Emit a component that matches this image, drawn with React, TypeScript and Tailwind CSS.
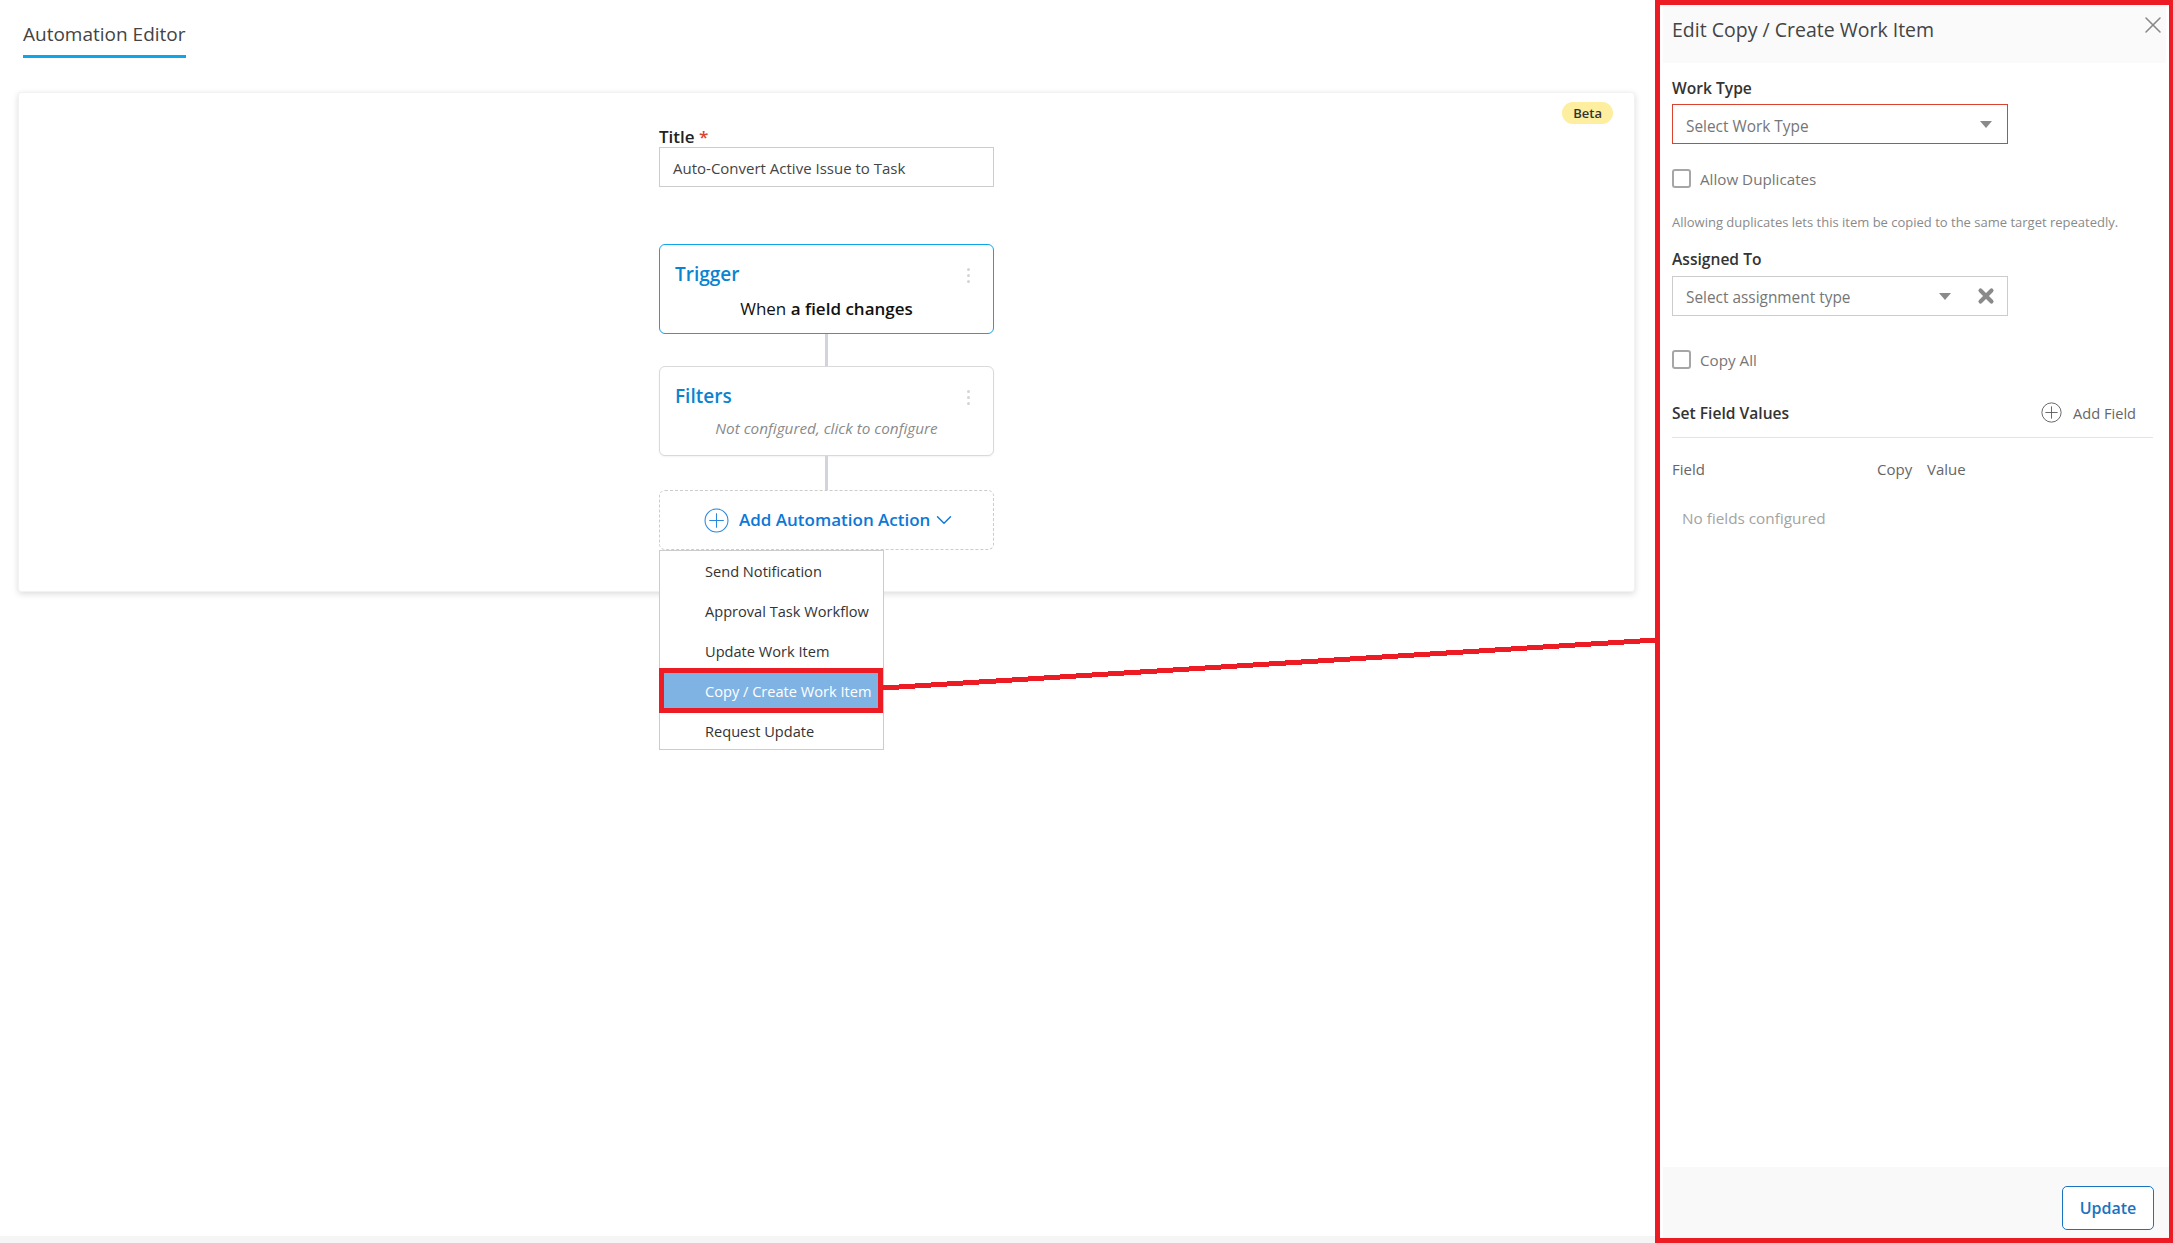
import { ChevronDown, X } from 'lucide-react';

const FONT = "font-['Open_Sans','Noto_Sans',sans-serif]";

const MENU_ITEMS = ['Send Notification', 'Approval Task Workflow', 'Update Work Item', 'Copy / Create Work Item', 'Request Update'];

function PlusCircle({ className }: { className?: string }) {
  return (
    <svg viewBox="0 0 24 24" fill="none" stroke="currentColor" strokeWidth="1" className={className}>
      <circle cx="12" cy="12" r="11" />
      <path d="M12 5v14M5 12h14" />
    </svg>
  );
}

function Kebab() {
  return (
    <div className="flex flex-col gap-[3px] mt-[3px]">
      <span className="w-[3px] h-[3px] rounded-full bg-[#d4d4d4]" />
      <span className="w-[3px] h-[3px] rounded-full bg-[#d4d4d4]" />
      <span className="w-[3px] h-[3px] rounded-full bg-[#d4d4d4]" />
    </div>
  );
}

function Caret() {
  return <span className="w-0 h-0 border-x-[6px] border-x-transparent border-t-[7px] border-t-[#8a8a8a]" />;
}

function Check({ label }: { label: string }) {
  return (
    <label className="flex items-start gap-[9px]">
      <span className="w-[19px] h-[19px] rounded-[3px] border-2 border-[#a6a6a6] bg-white" />
      <span className="h-[19px] text-[15.2px] leading-[20px] text-[#767676]">{label}</span>
    </label>
  );
}

export default function App() {
  return (
    <div className={`${FONT} relative flex w-full h-[1243px] overflow-hidden bg-white text-[#333]`}>
      <main className="flex-1 flex flex-col bg-white">
        <div className="h-[92px] pl-[23px] pt-[21px]">
          <div className="inline-block border-b-[3px] border-[#0ea5e9] h-[37px] text-[19px] leading-[26px] text-[#444]">Automation Editor</div>
        </div>
        <section className="relative ml-[18px] mr-[20px] h-[500px] rounded-[3px] bg-white border border-[#f2f2f2] shadow-[0_2px_6px_rgba(0,0,0,0.14)]">
          <span className="absolute right-[21px] top-[9px] rounded-full bg-[#fdeea0] px-[11px] h-[22px] leading-[22px] text-[13px] font-semibold text-[#333]">Beta</span>
          <div className="w-[335px] mx-auto pt-[34px]">
            <div className="text-[17px] leading-[20px] font-semibold text-[#222]">Title <span className="text-[#d9432f]">*</span></div>
            <div className="h-[40px] border border-[#ccc] flex items-center pl-[13px] pt-[2px] text-[15px] text-[#444]">Auto-Convert Active Issue to Task</div>

            <div className="mt-[57px] h-[90px] rounded-[6px] border border-[#0ea5e9] bg-white px-[15px] pt-[16px]">
              <div className="flex items-center justify-between pr-[8px]">
                <span className="text-[19px] leading-[26px] font-semibold text-[#0a84d0]">Trigger</span>
                <Kebab />
              </div>
              <div className="mt-[11px] text-center text-[17px] leading-[22px] text-[#111]">When <b className="font-semibold">a field changes</b></div>
            </div>
            <div className="mx-auto w-[3px] h-[32px] bg-[#d2d4dc]" />
            <div className="h-[90px] rounded-[6px] border border-[#d9d9d9] bg-white px-[15px] pt-[16px] shadow-[0_1px_2px_rgba(0,0,0,0.05)]">
              <div className="flex items-center justify-between pr-[8px]">
                <span className="text-[19px] leading-[26px] font-semibold text-[#0a84d0]">Filters</span>
                <Kebab />
              </div>
              <div className="mt-[9px] text-center text-[15.3px] leading-[20px] italic text-[#8a8a8a]">Not configured, click to configure</div>
            </div>
            <div className="mx-auto w-[3px] h-[34px] bg-[#d2d4dc]" />
            <div className="relative h-[60px] rounded-[6px] border border-dashed border-[#ccc] flex items-center pl-[44px] gap-[10px] text-[#0b78d8]">
              <PlusCircle className="w-[25px] h-[25px] text-[#2a88d8]" />
              <span className="text-[17px] font-semibold">Add Automation Action</span>
              <ChevronDown size={26} strokeWidth={1.3} className="ml-[-9px]" />
              <div className="absolute left-[-1px] top-[59px] w-[225px] h-[200px] border border-[#ccc] bg-white z-10 flex flex-col pt-[1px] overflow-hidden">
                {MENU_ITEMS.map((item) => (
                  <div
                    key={item}
                    className={
                      item.startsWith('Copy')
                        ? 'h-[40px] shrink-0 flex items-center pl-[45px] text-[14.6px] whitespace-nowrap bg-[#7fb3e4] text-white'
                        : 'h-[40px] shrink-0 flex items-center pl-[45px] text-[14.6px] whitespace-nowrap text-[#333]'
                    }
                  >
                    {item}
                  </div>
                ))}
              </div>
            </div>
          </div>
        </section>
        <div className="mt-auto h-[7px] bg-[#f5f5f5]" />
      </main>

      <aside className="w-[518px] h-full flex flex-col border-[5px] border-r-4 border-[#ed1c24] bg-white">
        <header className="relative h-[58px] mx-[3px] bg-[#fafafa] pl-[9px] pt-[12px] text-[19.5px] leading-[26px] text-[#444]">
          Edit Copy / Create Work Item
          <X size={28} strokeWidth={1.3} className="absolute right-[-1px] top-[6px] text-[#888]" />
        </header>
        <div className="flex-1 px-[12px] pt-[15px]">
          <div className="text-[15.6px] leading-[20px] font-semibold text-[#333]">Work Type</div>
          <div className="mt-[6px] w-[336px] h-[40px] border border-[#d9432f] flex items-center justify-between pl-[13px] pr-[15px] text-[15.4px] text-[#767676]">
            <span className="pt-[5px]">Select Work Type</span>
            <Caret />
          </div>
          <div className="mt-[25px]"><Check label="Allow Duplicates" /></div>
          <p className="mt-[25px] text-[13px] leading-[18px] text-[#8a8a8a]">Allowing duplicates lets this item be copied to the same target repeatedly.</p>
          <div className="mt-[18px] text-[15.6px] leading-[20px] font-semibold text-[#333]">Assigned To</div>
          <div className="mt-[7px] w-[336px] h-[40px] border border-[#ccc] flex items-center pl-[13px] pr-[15px] text-[15.4px] text-[#767676]">
            <span className="flex-1 pt-[4px]">Select assignment type</span>
            <Caret />
            <X size={22} strokeWidth={4.5} className="ml-[24px] mr-[-5px] text-[#8a8a8a]" />
          </div>
          <div className="mt-[34px]"><Check label="Copy All" /></div>
          <div className="mt-[33px] mr-[4px] flex items-center justify-between pb-[14px] border-b border-[#e3e3e3] pr-[17px]">
            <span className="text-[15.6px] leading-[20px] font-semibold text-[#333]">Set Field Values</span>
            <span className="flex items-center gap-[11px] text-[14.6px] leading-[20px] text-[#666]">
              <PlusCircle className="w-[21px] h-[21px] text-[#555]" />
              Add Field
            </span>
          </div>
          <div className="mt-[21px] flex text-[15px] leading-[20px] font-medium text-[#666]">
            <span className="w-[205px]">Field</span>
            <span className="w-[50px]">Copy</span>
            <span>Value</span>
          </div>
          <div className="mt-[29px] pl-[10px] text-[15.3px] leading-[20px] text-[#a3a3a3]">No fields configured</div>
        </div>
        <footer className="h-[71px] ml-[3px] bg-[#f9f9f9] flex justify-end pt-[19px] pr-[15px]">
          <button className="w-[92px] h-[44px] rounded-[5px] border border-[#1a73c0] bg-white text-[16px] font-semibold text-[#1a73c0]">Update</button>
        </footer>
      </aside>

      {/* red callout from the menu item to the panel */}
      <div className="absolute left-[659px] top-[668px] w-[224px] h-[45px] border-[5px] border-[#ed1c24] z-20 pointer-events-none" />
      <svg className="absolute left-0 top-0 w-full h-full z-20 pointer-events-none" viewBox="0 0 2173 1243">
        <line x1="883" y1="688" x2="1656" y2="640" stroke="#ed1c24" strokeWidth="5" shapeRendering="crispEdges" />
      </svg>
    </div>
  );
}
